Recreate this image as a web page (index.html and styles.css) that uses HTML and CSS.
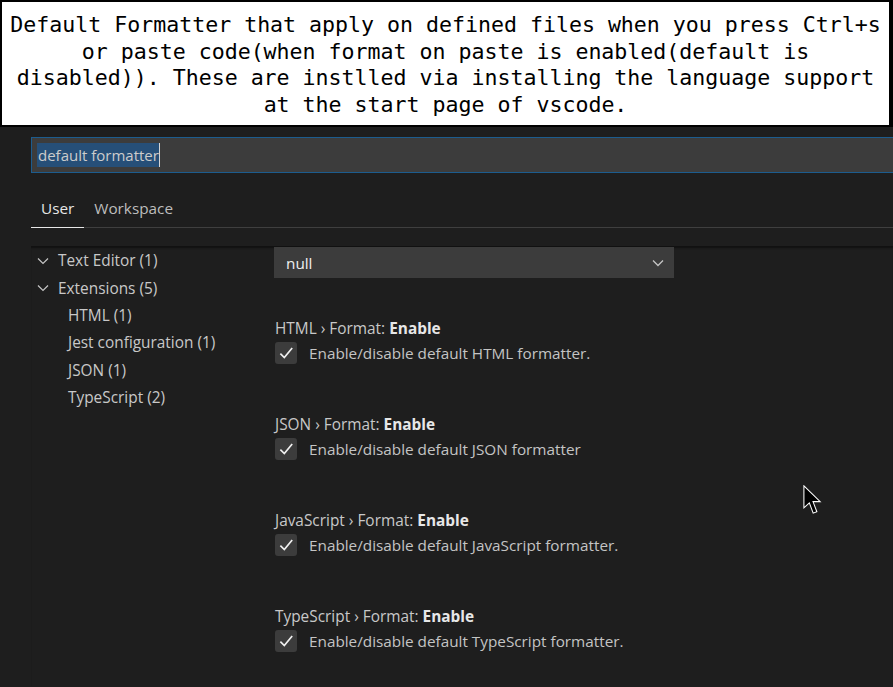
FILE: index.html
```html
<!DOCTYPE html>
<html>
<head>
<meta charset="utf-8">
<link rel="stylesheet" href="styles.css">
</head>
<body>
<div class="note">Default Formatter that apply on defined files when you press Ctrl+s or paste code(when format on paste is enabled(default is disabled)). These are instlled via installing the language support at the start page of vscode.</div>
<div class="settings">
  <div class="search"><span class="sel">default formatter</span><span class="caret"></span></div>
  <div class="tabs">
    <div class="tab active">User</div>
    <div class="tab">Workspace</div>
  </div>
  <div class="main">
    <div class="tree">
      <div class="node"><svg class="chev" viewBox="0 0 12 8"><path d="M1 1.5 L6 6.5 L11 1.5" /></svg>Text Editor (1)</div>
      <div class="node"><svg class="chev" viewBox="0 0 12 8"><path d="M1 1.5 L6 6.5 L11 1.5" /></svg>Extensions (5)</div>
      <div class="node child">HTML (1)</div>
      <div class="node child">Jest configuration (1)</div>
      <div class="node child">JSON (1)</div>
      <div class="node child">TypeScript (2)</div>
    </div>
    <div class="content">
      <div class="dropdown"><span>null</span><svg class="dchev" viewBox="0 0 12 8"><path d="M1 1.5 L6 6.5 L11 1.5" /></svg></div>
      <div class="item">
        <div class="title">HTML › Format: <b>Enable</b></div>
        <div class="row"><span class="check"><svg viewBox="0 0 16 16"><path d="M3 8.5 L6.5 12 L13.5 3.5" /></svg></span><span class="desc">Enable/disable default HTML formatter.</span></div>
      </div>
      <div class="item">
        <div class="title">JSON › Format: <b>Enable</b></div>
        <div class="row"><span class="check"><svg viewBox="0 0 16 16"><path d="M3 8.5 L6.5 12 L13.5 3.5" /></svg></span><span class="desc">Enable/disable default JSON formatter</span></div>
      </div>
      <div class="item">
        <div class="title">JavaScript › Format: <b>Enable</b></div>
        <div class="row"><span class="check"><svg viewBox="0 0 16 16"><path d="M3 8.5 L6.5 12 L13.5 3.5" /></svg></span><span class="desc">Enable/disable default JavaScript formatter.</span></div>
      </div>
      <div class="item">
        <div class="title">TypeScript › Format: <b>Enable</b></div>
        <div class="row"><span class="check"><svg viewBox="0 0 16 16"><path d="M3 8.5 L6.5 12 L13.5 3.5" /></svg></span><span class="desc">Enable/disable default TypeScript formatter.</span></div>
      </div>
    </div>
  </div>
</div>
<svg class="cursor" width="21" height="32" viewBox="0 0 13 20"><path d="M0.5 0.5 L0.5 14.3 L3.9 11.2 L6.3 17.6 L8.6 16.7 L6.2 10.4 L10.7 10.4 Z" fill="#000" stroke="#fff" stroke-width="0.65" stroke-linejoin="miter"/></svg>
</body>
</html>
```
FILE: styles.css
```css
html, body {
  margin: 0;
  padding: 0;
  background: #1e1e1e;
  overflow: hidden;
  height: 687px;
}
body {
  position: relative;
  font-family: "Open Sans", "Noto Sans", sans-serif;
}
.note {
  box-sizing: border-box;
  height: 127px;
  background: #fff;
  border: 2px solid #000;
  border-right-width: 4px;
  padding: 10px 2px 0 2px;
  font-family: "DejaVu Sans Mono", "Liberation Mono", monospace;
  font-size: 21.6px;
  line-height: 26.7px;
  color: #000;
  text-align: center;
  letter-spacing: -0.01px;
}
.settings {
  padding: 10px 0 0 31px;
}
.search {
  box-sizing: border-box;
  height: 36px;
  margin-right: -4px;
  background: #3c3c3c;
  border: 1px solid #1c5c8e;
  display: flex;
  align-items: center;
  padding-left: 5px;
}
.sel {
  background: #264f78;
  color: #cccccc;
  font-size: 15px;
  line-height: 24px;
  padding-left: 1px;
}
.caret {
  width: 1px;
  height: 24px;
  background: #d4d4d4;
}
.tabs {
  display: flex;
  height: 54px;
  border-bottom: 1px solid #3f3f3f;
  align-items: flex-end;
}
.tab {
  font-size: 15.3px;
  color: #bdbdbd;
  padding: 0 10px 9px 10px;
  line-height: 20px;
  border-bottom: 1px solid transparent;
  margin-bottom: -1px;
}
.tab.active {
  color: #e7e7e7;
  border-bottom-color: #e7e7e7;
}
.main {
  display: flex;
  margin-top: 18px;
  box-shadow: inset 0 3px 2px -1px #111;
  min-height: 440px;
}
.tree {
  width: 243px;
  flex: none;
  padding-top: 1px;
}
.node {
  display: flex;
  align-items: center;
  height: 27.4px;
  font-size: 15.4px;
  color: #c8c8c8;
  padding-left: 6px;
}
.node.child {
  padding-left: 37px;
}
.chev {
  width: 12px;
  height: 8px;
  margin-right: 9px;
  fill: none;
  stroke: #c5c5c5;
  stroke-width: 1.2;
}
.content {
  flex: 1;
  padding-top: 1px;
}
.dropdown {
  box-sizing: border-box;
  width: 400px;
  height: 31px;
  background: #3c3c3c;
  display: flex;
  align-items: center;
  justify-content: space-between;
  padding: 0 10px 0 12px;
  font-size: 15.3px;
  color: #f0f0f0;
}
.dchev {
  width: 12px;
  height: 8px;
  fill: none;
  stroke: #c5c5c5;
  stroke-width: 1.3;
}
.item {
  display: flex;
  flex-direction: column;
  gap: 2px;
  margin-top: 40px;
}
.item + .item {
  margin-top: 50px;
}
.title {
  font-size: 15.4px;
  line-height: 22px;
  color: #c8c8c8;
  padding-left: 1px;
}
.title b {
  color: #e7e7e7;
  font-weight: 700;
}
.row {
  display: flex;
  align-items: center;
  height: 22px;
}
.check {
  box-sizing: border-box;
  width: 22px;
  height: 22px;
  border-radius: 3px;
  background: #3c3c3c;
  display: flex;
  align-items: center;
  justify-content: center;
  margin-left: 1px;
  margin-right: 12px;
}
.check svg {
  width: 18px;
  height: 18px;
  fill: none;
  stroke: #f0f0f0;
  stroke-width: 1.5;
}
.desc {
  font-size: 15.3px;
  color: #c4c4c4;
}
.cursor {
  position: absolute;
  left: 803px;
  top: 485px;
}
```
